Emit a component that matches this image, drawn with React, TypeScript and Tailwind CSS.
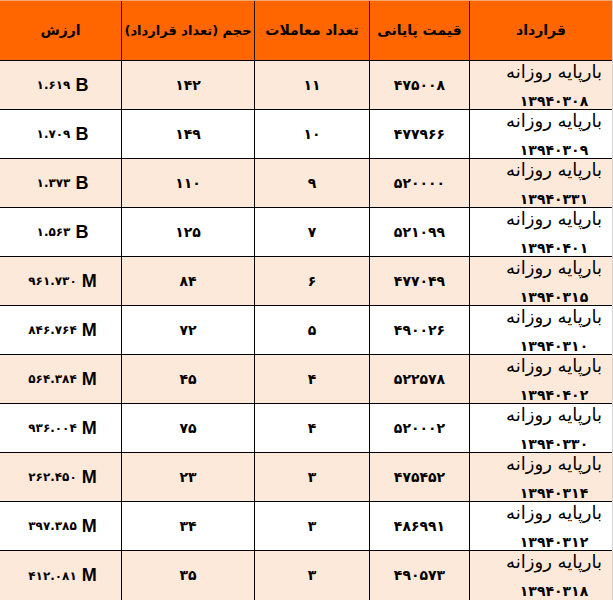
import React from "react";

type Row = { date: string; price: string; trades: string; vol: string; val: string; unit: string };

const rows: Row[] = [
  { date: "۱۳۹۴۰۳۰۸", price: "۴۷۵۰۰۸", trades: "۱۱", vol: "۱۴۲", val: "۱.۶۱۹", unit: "B" },
  { date: "۱۳۹۴۰۳۰۹", price: "۴۷۷۹۶۶", trades: "۱۰", vol: "۱۴۹", val: "۱.۷۰۹", unit: "B" },
  { date: "۱۳۹۴۰۳۳۱", price: "۵۲۰۰۰۰", trades: "۹", vol: "۱۱۰", val: "۱.۳۷۳", unit: "B" },
  { date: "۱۳۹۴۰۴۰۱", price: "۵۲۱۰۹۹", trades: "۷", vol: "۱۲۵", val: "۱.۵۶۳", unit: "B" },
  { date: "۱۳۹۴۰۳۱۵", price: "۴۷۷۰۴۹", trades: "۶", vol: "۸۴", val: "۹۶۱.۷۳۰", unit: "M" },
  { date: "۱۳۹۴۰۳۱۰", price: "۴۹۰۰۲۶", trades: "۵", vol: "۷۲", val: "۸۴۶.۷۶۴", unit: "M" },
  { date: "۱۳۹۴۰۴۰۲", price: "۵۲۲۵۷۸", trades: "۴", vol: "۴۵", val: "۵۶۴.۳۸۴", unit: "M" },
  { date: "۱۳۹۴۰۳۳۰", price: "۵۲۰۰۰۲", trades: "۴", vol: "۷۵", val: "۹۳۶.۰۰۴", unit: "M" },
  { date: "۱۳۹۴۰۳۱۴", price: "۴۷۵۴۵۲", trades: "۳", vol: "۲۳", val: "۲۶۲.۴۵۰", unit: "M" },
  { date: "۱۳۹۴۰۳۱۲", price: "۴۸۶۹۹۱", trades: "۳", vol: "۳۴", val: "۳۹۷.۳۸۵", unit: "M" },
  { date: "۱۳۹۴۰۳۱۸", price: "۴۹۰۵۷۳", trades: "۳", vol: "۳۵", val: "۴۱۲.۰۸۱", unit: "M" },
];

const headers = ["قرارداد", "قیمت پایانی", "تعداد معاملات", "حجم (تعداد قرارداد)", "ارزش"];

export default function App() {
  return (
    <div
      dir="rtl"
      className="w-[613px] h-[600px] overflow-hidden bg-white text-black border-r border-[#d4d4d4]"
      style={{ fontFamily: '"DejaVu Sans", sans-serif' }}
    >
      <div className="grid grid-cols-[143px_100px_115px_133px_121px] h-[61px] bg-[#ff6600] border-t border-[#f0a868] border-b border-b-black">
        {headers.map((h, i) => (
          <div
            key={i}
            className={`flex items-center justify-center whitespace-nowrap font-bold ${i === 3 ? "text-[13px]" : "text-[14px]"} ${i < 4 ? "border-l border-[#2a1200]" : ""}`}
          >
            {h}
          </div>
        ))}
      </div>
      {rows.map((r, idx) => (
        <div
          key={idx}
          className={`grid grid-cols-[143px_100px_115px_133px_121px] h-[49px] ${idx % 2 === 0 ? "bg-[#fde9d9]" : "bg-white"} ${idx < rows.length - 1 ? "border-b border-black" : ""}`}
        >
          <div className="border-l border-black flex flex-col items-center pl-[26px] whitespace-nowrap">
            <div className="h-[22px] leading-[22px] text-[18px]">بارپایه روزانه</div>
            <div className="h-[26px] leading-[36px] text-[14px] font-bold">{r.date}</div>
          </div>
          <div className="border-l border-black flex items-center justify-center font-bold text-[14px]">{r.price}</div>
          <div className="border-l border-black flex items-center justify-center font-bold text-[14px]">{r.trades}</div>
          <div className="border-l border-black flex items-center justify-center font-bold text-[14px]">{r.vol}</div>
          <div dir="ltr" className="flex items-center justify-center gap-[5px] font-bold pl-[4px]">
            <span className="text-[12px]">{r.val}</span>
            <span className="text-[18px]" style={{ fontFamily: '"Liberation Sans", sans-serif' }}>{r.unit}</span>
          </div>
        </div>
      ))}
    </div>
  );
}
